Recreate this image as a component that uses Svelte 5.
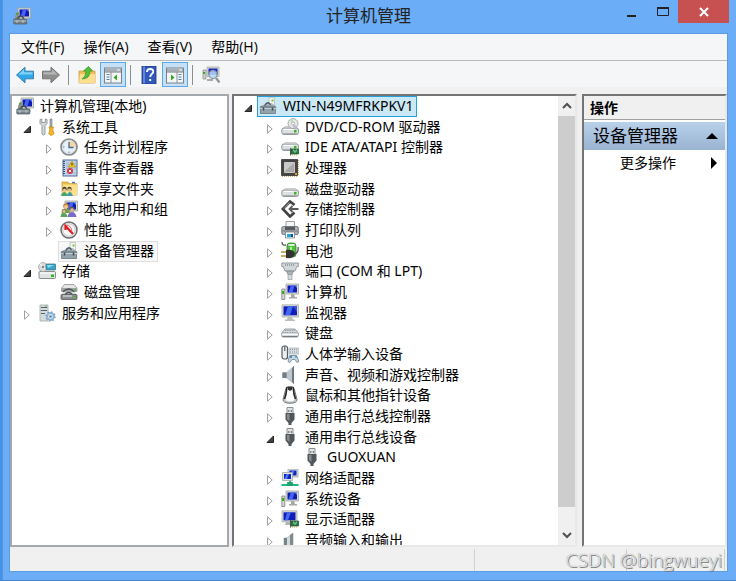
<script lang="ts">
  type TreeRow = {
    label: string;
    icon: string;
    level: number;
    state?: 'open' | 'closed';
    selected?: boolean;
  };

  const menus = ['文件(F)', '操作(A)', '查看(V)', '帮助(H)'];

  const consoleRows: TreeRow[] = [
    {label: '计算机管理(本地)', icon: 'console', level: 0},
    {label: '系统工具', icon: 'tools', level: 1, state: 'open'},
    {label: '任务计划程序', icon: 'clock', level: 2, state: 'closed'},
    {label: '事件查看器', icon: 'events', level: 2, state: 'closed'},
    {label: '共享文件夹', icon: 'shared', level: 2, state: 'closed'},
    {label: '本地用户和组', icon: 'users', level: 2, state: 'closed'},
    {label: '性能', icon: 'gauge', level: 2, state: 'closed'},
    {label: '设备管理器', icon: 'device', level: 2, selected: true},
    {label: '存储', icon: 'storage', level: 1, state: 'open'},
    {label: '磁盘管理', icon: 'disks', level: 2},
    {label: '服务和应用程序', icon: 'services', level: 1, state: 'closed'},
  ];

  const deviceRows: TreeRow[] = [
    {label: 'WIN-N49MFRKPKV1', icon: 'device', level: 0, state: 'open', selected: true},
    {label: 'DVD/CD-ROM 驱动器', icon: 'dvd', level: 1, state: 'closed'},
    {label: 'IDE ATA/ATAPI 控制器', icon: 'ide', level: 1, state: 'closed'},
    {label: '处理器', icon: 'cpu', level: 1, state: 'closed'},
    {label: '磁盘驱动器', icon: 'drive', level: 1, state: 'closed'},
    {label: '存储控制器', icon: 'controller', level: 1, state: 'closed'},
    {label: '打印队列', icon: 'printer', level: 1, state: 'closed'},
    {label: '电池', icon: 'battery', level: 1, state: 'closed'},
    {label: '端口 (COM 和 LPT)', icon: 'port', level: 1, state: 'closed'},
    {label: '计算机', icon: 'computer', level: 1, state: 'closed'},
    {label: '监视器', icon: 'monitor', level: 1, state: 'closed'},
    {label: '键盘', icon: 'keyboard', level: 1, state: 'closed'},
    {label: '人体学输入设备', icon: 'hid', level: 1, state: 'closed'},
    {label: '声音、视频和游戏控制器', icon: 'speaker', level: 1, state: 'closed'},
    {label: '鼠标和其他指针设备', icon: 'mouse', level: 1, state: 'closed'},
    {label: '通用串行总线控制器', icon: 'usb', level: 1, state: 'closed'},
    {label: '通用串行总线设备', icon: 'usb', level: 1, state: 'open'},
    {label: 'GUOXUAN', icon: 'usb', level: 2},
    {label: '网络适配器', icon: 'network', level: 1, state: 'closed'},
    {label: '系统设备', icon: 'computer', level: 1, state: 'closed'},
    {label: '显示适配器', icon: 'display', level: 1, state: 'closed'},
    {label: '音频输入和输出', icon: 'audio', level: 1, state: 'closed'},
  ];

  // all icons are drawn on an 18 x 18 grid
  const screen = `<path d="M5 1h12.500v10H5z" fill="#d9dcd6" stroke="#a0a49c" stroke-width=".8"/><path d="M6.500 2.500h9.500v7H6.500z" fill="#1019b8"/><path d="M10 2.500h3.500l-2 7H7.500z" fill="#4466ee"/><path d="M13.500 2.500H16v2.500z" fill="#6b8cf5"/>`;
  const disk = `<path d="M4 8.500h10.500l2.500 2.500H1.500z" fill="#f1f2f2" stroke="#b9bdbe" stroke-width=".7"/><rect x=".8" y="10" width="16.800" height="6.500" rx="2" fill="#dcdfe0" stroke="#8b9092" stroke-width=".9"/><path d="M2.500 11.500h10" stroke="#fff"/><path d="M2 15.500h14" stroke="#aaaeb0"/><rect x="13" y="12" width="2.500" height="2.500" fill="#36b51d"/>`;
  const board = `<path d="M10 11h7.500v5H10z" fill="#1f7c43" stroke="#17552f" stroke-width=".7"/><path d="M12 12h1v2h2v-2h1" fill="none" stroke="#b4d0b8" stroke-width=".8"/><path d="M11 17h6" stroke="#d7aa31" stroke-dasharray="1 1"/><path d="M9.500 10v7.500" stroke="#555"/>`;
  const arrow = 'M.5 9L9 1.200v4h8.500v7.600H9v4z';

  const icons: Record<string, string> = {
    console: `${screen}<path d="M7 11h7l1 4H9z" fill="#c7cac3"/><path d="M2 9l2-4h3v7H2z" fill="#8d9290"/><path d="M3 6h2v1.500H3z" fill="#43a52c"/><path d="M4 12q4-6 7 0" fill="none" stroke="#3f4b50" stroke-width="1.300"/><rect x=".8" y="12" width="13" height="5" rx=".6" fill="#708087" stroke="#4d5b61" stroke-width=".7"/><path d="M1 14h12M4 13v3M10 13v3" stroke="#c9d2d5" stroke-width=".8"/>`,
    tools: `<path d="M2 1.500v4L4 7.500v8.500q1.500 2 3 0V7.500L9 5.500v-4L7.300 1v3.500H3.800V1z" fill="#d6dadb" stroke="#7e8587" stroke-width=".8"/><path d="M12 1h2v8.500h-2z" fill="#a9afb2" stroke="#70777a" stroke-width=".6"/><path d="M11 9h4.500l-.7 2.500 1 4.500-2.500 1.500-2.500-1.500 1-4.500z" fill="#f6b524" stroke="#c4820e" stroke-width=".7"/>`,
    clock: `<circle cx="9" cy="9" r="8" fill="#edf4fa" stroke="#85898b" stroke-width="1.700"/><circle cx="9" cy="9" r="6.500" fill="#e6f1fb" stroke="#c9ced2" stroke-width=".6"/><path d="M9 9V2.700A6.300 6.300 0 0 1 15.300 9z" fill="#f6d69a"/><path d="M9 4v5.500h4.500" fill="none" stroke="#416a92" stroke-width="1.300"/><path d="M9 13.500v1.500M3 9h1.500" stroke="#6c8394"/>`,
    events: `<rect x="3" y="1" width="14" height="16" fill="#c4d4eb" stroke="#536a9e"/><path d="M4 2v14" stroke="#395183" stroke-width="2" stroke-dasharray="1 1"/><path d="M6 4h10M6 6h10M6 8h10M6 10h10M6 14h10" stroke="#90a7d0" stroke-width=".7"/><path d="M12 2l3.500 6h-7z" fill="#ffd528" stroke="#b98b00" stroke-width=".7"/><path d="M12 4v2.500" stroke="#222"/><circle cx="10" cy="12" r="3" fill="#d8313a"/><path d="M8.800 10.800l2.400 2.400m0-2.400l-2.400 2.400" stroke="#fff"/>`,
    shared: `<path d="M2 2h6l1 1.500h8V15H2z" fill="#e9ba4e" stroke="#c99b42" stroke-width=".7"/><path d="M3 4.500h14V15H2z" fill="#fbe089"/><path d="M12 2.500h3" stroke="#387bba" stroke-width="1.400"/><circle cx="4.500" cy="9" r="2.200" fill="#443b28"/><circle cx="9.500" cy="9" r="2.200" fill="#554b38"/><circle cx="4.500" cy="10" r="1.500" fill="#f0c8a4"/><circle cx="9.500" cy="10" r="1.500" fill="#f0c8a4"/><path d="M.8 16q3.500-8 7 0z" fill="#43a565"/><path d="M6.500 16q3.500-8 6.500 0z" fill="#3f9da5"/>`,
    users: `${screen}<circle cx="6" cy="6" r="2.800" fill="#c58537"/><circle cx="6" cy="7" r="1.900" fill="#f3c99c"/><path d="M1.500 13q1-5 4.500-4 4 0 4 4z" fill="#75a23c"/><circle cx="12" cy="9" r="2.600" fill="#655b51"/><circle cx="12" cy="10" r="1.800" fill="#e8bd96"/><path d="M7.500 17q1-5 4.500-5t4.500 5z" fill="#7b6bc8"/><circle cx="4" cy="11" r="2.300" fill="#8b8a51"/><circle cx="4" cy="11.500" r="1.300" fill="#f0c8a4"/><path d="M.5 17q1-5 3.500-4 3 0 3.500 4z" fill="#56a55a"/>`,
    gauge: `<circle cx="9" cy="9" r="8" fill="#f8f8f8" stroke="#686c6e" stroke-width="1.500"/><circle cx="9" cy="9" r="6.200" fill="none" stroke="#aaa" stroke-width=".7"/><path d="M5.500 9V5l7.500 8" fill="none" stroke="#e21c24" stroke-width="2.200"/><path d="M6 4.500q5-1 6 6" fill="none" stroke="#e8595c" stroke-width=".9"/>`,
    device: `<path d="M10 .5h5.500v8H10z" fill="#f2f5f0" stroke="#b0b7b2" stroke-width=".7"/><path d="M12.500 2.500h2v2h-2z" fill="#6fcb3a"/><path d="M3 9l4-3h6l3 3z" fill="#b6bec2"/><path d="M5.500 9q3.500-6 6-1" fill="none" stroke="#495359" stroke-width="1.300"/><path d="M.8 9.500L3 8.500h12l2.200 1v2.500H.8z" fill="#7c8a93"/><rect x="1.500" y="11.500" width="15" height="5" fill="#93a2ab" stroke="#6b7982" stroke-width=".8"/><path d="M1 11.500h16" stroke="#c3cdd3"/><path d="M4.500 10.500v3M13.500 10.500v3" stroke="#3f4c54" stroke-width="1.500"/>`,
    storage: `<rect x="1" y="9.500" width="16.500" height="7" rx="1" fill="#e0e3e4" stroke="#7c8284" stroke-width=".9"/><path d="M2 11h14" stroke="#fff"/><rect x="13" y="12.500" width="3" height="2.500" fill="#31b51e"/><circle cx="5" cy="5" r="4.500" fill="#dadede" stroke="#9ba1a2" stroke-width=".7"/><path d="M5 5L2 1.500M5 5l3 3" stroke="#fff"/><circle cx="5" cy="5" r="1.200" fill="#888"/><rect x="8" y="2" width="9.500" height="6" rx=".6" fill="#35a6cc" stroke="#42616e" stroke-width=".7"/><path d="M9 3h7l-6 3z" fill="#8bdcf0"/>`,
    disks: `<path d="M1.500 5l3-3.500h9.500l3 3.500v3.500H1.500z" fill="#e3e4e3" stroke="#8b9092" stroke-width=".8"/><path d="M2 5h15v3.500H2z" fill="#a1a5a6"/><path d="M3 9h12l2 3H1z" fill="#d8dad9"/><path d="M3 8.500q6-5 11 0M5 11.500q4-4 7 0" fill="none" stroke="#4c5152" stroke-width="1.500"/><rect x="1" y="11.500" width="16" height="5" rx="1" fill="#888d8e" stroke="#54595a" stroke-width=".8"/><path d="M3 13h9" stroke="#eee"/><path d="M14 7h2M13.500 14h2" stroke="#49b52a" stroke-width="1.500"/>`,
    services: `<path d="M2 1h8v16H2z" fill="#d5dbdd" stroke="#a0aab0" stroke-width=".8"/><path d="M3 3.500h6M3 6.500h6M3 9.500h4" stroke="#536167" stroke-width="1.200"/><path d="M8 1.500V3" stroke="#3bb537"/><circle cx="12.500" cy="12.500" r="3.400" fill="#e3edf5" stroke="#8db3d2" stroke-width="2"/><circle cx="12.500" cy="12.500" r="4.600" fill="none" stroke="#7c9fbd" stroke-width="1.300" stroke-dasharray="1.600 2"/><circle cx="12.500" cy="12.500" r="1.300" fill="#5d86aa"/>`,
    dvd: `${disk}<circle cx="12" cy="5.500" r="5" fill="#e6e6e3" stroke="#989b9c" stroke-width=".8"/><path d="M12 5.500L8.500 2q2-2 3.500-1z" fill="#b7e2b8"/><path d="M12 5.500l4 3q-2 2-4 1z" fill="#c9b7e8"/><circle cx="12" cy="5.500" r="1.500" fill="#fff" stroke="#999" stroke-width=".7"/>`,
    ide: `<g transform="translate(0 -4)">${disk}</g>${board}`,
    cpu: `<path d="M1 17h16M17 1v16" stroke="#c59d39" stroke-width="1.600" stroke-dasharray="1 1"/><path d="M.5 .5h16v16H.5z" fill="#454442" stroke="#2b2a29" stroke-width=".7"/><path d="M3.500 3.500h10v10h-10z" fill="#a9aaa8" stroke="#ddd" stroke-width=".8"/><path d="M4 4h9l-9 8z" fill="#c9cac7"/><path d="M14 14h2v2h-2z" fill="#e1a423"/>`,
    drive: disk,
    controller: `<path d="M13.500 5L9 1.500 1.800 9 9 16.500l4.500-4" fill="none" stroke="#424443" stroke-width="2.700"/><path d="M8.500 2.500L3 8.500" stroke="#bbb" stroke-width=".8"/><path d="M17.500 9H10M11.500 6L8.500 9l3 3" fill="none" stroke="#5a5c5b" stroke-width="1.800"/>`,
    printer: `<path d="M5 .5h8.500V8H5z" fill="#f6f7f7" stroke="#888" stroke-width=".8"/><rect x=".8" y="5.500" width="16.500" height="8" rx="1.500" fill="#aeb2b5" stroke="#60656a" stroke-width=".8"/><path d="M4 6h10v3H4z" fill="#555b60"/><path d="M1 10h16" stroke="#767b7f"/><path d="M4.500 11h9v6h-9z" fill="#f9fbfc" stroke="#7b8186" stroke-width=".8"/><path d="M6 13h5v3H6z" fill="#25a6d5"/><path d="M10 13h2v3h-2z" fill="#244ca0"/>`,
    battery: `<rect x="6" y="1" width="9" height="14" rx="3" fill="#53bf3e" stroke="#2b812b" stroke-width=".8"/><path d="M7.500 4h6V2h-6z" fill="#dceedd"/><path d="M9 5h2v9H9z" fill="#b3ed92"/><path d="M1 0q0 4 4 3M13 12q5-1 4-7" fill="none" stroke="#555" stroke-width="1.300"/><path d="M5 8q8-1 9 4-1 5-9 4z" fill="#323432"/><path d="M0 10h5M0 14h5" stroke="#b89129" stroke-width="1.600"/>`,
    port: `<path d="M.8 1h16.500v3.500h-1.500L14 9H4L2.300 4.500H.8z" fill="#d2d7da" stroke="#8b9397" stroke-width=".9"/><path d="M4 3h10" stroke="#61686d" stroke-dasharray="1 1"/><path d="M5.500 9h7L11 12.500H7z" fill="#a8b2b9" stroke="#7c888e" stroke-width=".8"/><path d="M7 12.500h4v5H7z" fill="#d6dadb" stroke="#858c8f" stroke-width=".6"/>`,
    computer: `${screen}<path d="M10 11h3l1 3h2v1.500H8V14h2z" fill="#a5aaa3"/><path d="M.8 6h3v10.500h-3z" fill="#d4d7d3" stroke="#7a8279" stroke-width=".8"/><path d="M1 8h2v3H1z" fill="#34a923"/>`,
    monitor: `<path d="M1 .8h16.500V13H1z" fill="#d7d9d6" stroke="#a9ada8" stroke-width=".8"/><path d="M2.500 2.300h13.500v9H2.500z" fill="#111dbb"/><path d="M7 2.300h5l-3 9H4z" fill="#4369ed"/><path d="M12 2.300h4V8z" fill="#3354dd"/><path d="M7 13h4l1 2.500h2V17H4v-1.500h2z" fill="#bbbeb5"/>`,
    keyboard: `<path d="M4 5h10l3.300 4v2.500q0 1.500-1.500 1.500H2.200Q.7 13 .7 11.500V9z" fill="#d5d9de" stroke="#8b929a" stroke-width=".9" stroke-linejoin="round"/><path d="M2.500 8.500h13M4 6.500h10" stroke="#8d959c" stroke-dasharray="1 .7"/><path d="M1 10.500h16" stroke="#fff"/><path d="M1.500 12.500h15" stroke="#737a82"/>`,
    hid: `<path d="M8 3h10v6H8z" fill="#d6dce1" stroke="#a4adb4" stroke-width=".7"/><path d="M9 4.500h8M9 7h8" stroke="#87929b" stroke-dasharray="1 1"/><rect x="1" y="1" width="5.500" height="13" rx="2" fill="#eee" stroke="#555c61" stroke-width="1.200"/><path d="M3.300 1h1v5h-1z" fill="#444b50"/><path d="M7 16.500l1.500-6h7l2.500 6-2 1-2-3h-3l-2 3z" fill="#c8d7e2" stroke="#687f90" stroke-width=".8"/><circle cx="10" cy="12" r="1" fill="#2b72a6"/><circle cx="15" cy="12" r="1" fill="#30a9d7"/>`,
    speaker: `<path d="M1.500 6.500h4L13 0v18l-7.500-6h-4z" fill="#818c95"/><path d="M5.500 6.500L12 1v16l-6.500-5z" fill="#c1c8cd"/><path d="M11 2.500L13 0v18l-2-2.500z" fill="#6b7780"/><path d="M1.500 6.500h4V12h-4z" fill="#737f87"/>`,
    mouse: `<path d="M6.500 .8h5q1.500 0 2 3.200L16 13.500q0 3.700-7 3.700t-7-3.700L4.500 4q.5-3.200 2-3.200z" fill="#c4c8ca" stroke="#70767a" stroke-width="1"/><path d="M6 2h6v5l1.500 7q-4.500 3-9 0L6 7z" fill="#fbfbfb"/><path d="M6 1L5 8l-1.500 5M12 1l1 7 1.500 5" fill="none" stroke="#222" stroke-width="1.500"/><path d="M7 .8h4v2.500q-2 3-4 0z" fill="#333"/>`,
    usb: `<path d="M6 .5h6V7H6z" fill="#e1e3e3" stroke="#8b9193"/><path d="M7.300 3h1v2h-1zM9.800 3h1v2h-1z" fill="#666"/><path d="M4.500 6h9v6.500L10.500 16v2h-3v-2l-3-3.500z" fill="#51565a"/><path d="M6 7h2.500v7L6 12z" fill="#858b8e"/>`,
    network: `<path d="M7 0h10v8H7z" fill="#d8dedc" stroke="#a0a9a7" stroke-width=".8"/><path d="M8.500 1.500h7v5h-7z" fill="#1225be"/><path d="M11 1.500h2.500l-2 5H9z" fill="#4d78f2"/><path d="M1.500 3.500h10v8h-10z" fill="#e0e2df" stroke="#a0a5a2" stroke-width=".8"/><path d="M3 5h7v5H3z" fill="#1225be"/><path d="M5.500 5H8l-2 5H3.500z" fill="#4d78f2"/><path d="M9 12v3M.5 16h17" stroke="#21bd7c" stroke-width="2"/><rect x="6" y="13" width="6" height="4" rx="1" fill="#1fa36f"/>`,
    display: `<path d="M1 .8h15v11H1z" fill="#d7d9d6" stroke="#a9ada8" stroke-width=".8"/><path d="M2.500 2.300h12v8h-12z" fill="#111dbb"/><path d="M6 2.300h4l-3 8H4z" fill="#4369ed"/><path d="M5 12h4.500v3H4z" fill="#b2b5ad"/>${board}`,
    audio: `<path d="M3 7h3l6-5v15H3z" fill="#d7dadc" stroke="#a2abb0" stroke-width=".7"/><path d="M9 4l3-2v15H9z" fill="#7f8a90"/><path d="M3 7h3v10H3z" fill="#75838b"/>`,
    back: `<path d="${arrow}" fill="#2ea8e8" stroke="#3b7fb4" stroke-linejoin="round"/><path d="M2.500 8.500L8 3.200v3h8.500v2.300z" fill="#7fd1f5"/>`,
    forward: `<path d="${arrow}" transform="matrix(-1 0 0 1 18 0)" fill="#8e8e8e" stroke="#757575" stroke-linejoin="round"/><path d="M1.500 6.200H10v-3l5.500 5.300h-14z" fill="#b5b5b5"/>`,
    up: `<path d="M1 5h6l1-2h5v2h4v12H1z" fill="#efbf55" stroke="#cfa04a" stroke-width=".8"/><path d="M2 8h15v9H1z" fill="#fbdf8f"/><path d="M4 13q4-2 4-8H5.500L10.500 .5 14.500 5H12q0 8-8 8z" fill="#55be35" stroke="#3d9a34" stroke-width=".8"/>`,
    paneleft: `<rect x=".5" y="2" width="17" height="15" fill="#f5f6f6" stroke="#79828a"/><path d="M1 2.500h16v3H1z" fill="#a6afb6"/><path d="M13 4h3" stroke="#fff"/><path d="M1 6h16" stroke="#737d85"/><path d="M2.500 8.500h3M2.500 11h3M2.500 13.500h3" stroke="#4b83ba"/><path d="M7 6v11" stroke="#89929a"/><path d="M13 8.500v6L9.500 11.500z" fill="#35a51c"/>`,
    paneright: `<rect x=".5" y="2" width="17" height="15" fill="#f5f6f6" stroke="#79828a"/><path d="M1 2.500h16v3H1z" fill="#a6afb6"/><path d="M13 4h3" stroke="#fff"/><path d="M1 6h16" stroke="#737d85"/><path d="M12.500 8.500h3M12.500 11h3M12.500 13.500h3" stroke="#4b83ba"/><path d="M11 6v11" stroke="#89929a"/><path d="M5 8.500v6l3.500-3z" fill="#35a51c"/>`,
    help: `<path d="M2 0h14v18H2z" fill="#3058bd" stroke="#20346d" stroke-width=".8"/><path d="M4 .5v17" stroke="#7594e1" stroke-width="1.500"/><path d="M7 6q0-3 3-3 3.500 0 3.200 2.800C13 8 10.200 8 10.200 11" fill="none" stroke="#fff" stroke-width="1.900"/><path d="M9.200 13h2v2h-2z" fill="#fff"/>`,
    scan: `<path d="M5 1h12v9.500H5z" fill="#d5d8d4" stroke="#a9ada6" stroke-width=".8"/><path d="M6.500 2.500h9V9h-9z" fill="#1826bd"/><path d="M1 4h3v9H1z" fill="#ccd0ca" stroke="#8d958c" stroke-width=".8"/><path d="M1 6h2v2H1z" fill="#34a923"/><path d="M5 13h6v2H5z" fill="#aaa"/><circle cx="11" cy="8.500" r="4" fill="#bbdffa" fill-opacity=".85" stroke="#8b98a2" stroke-width="1.300"/><path d="M14 12l3.500 4.500" stroke="#8d9396" stroke-width="2.200"/>`,
  };
</script>

{#snippet glyph(name: string)}
  <svg class="icon" viewBox="0 0 18 18" aria-hidden="true">{@html icons[name]}</svg>
{/snippet}

{#snippet tool(name: string, label: string, pressed = false)}
  <button type="button" class="tool" class:pressed title={label} aria-label={label}>
    {@render glyph(name)}
  </button>
{/snippet}

{#snippet tree(rows: TreeRow[], label: string)}
  <ul class="tree" aria-label={label}>
    {#each rows as row}
      <li class="row level-{row.level}">
        {#if row.state}
          <button
            type="button"
            class="toggle"
            aria-label={row.label}
            aria-expanded={row.state === 'open'}
          >
            <svg viewBox="0 0 10 10" aria-hidden="true">
              {#if row.state === 'open'}
                <path d="M8.500 2v6.500H2z" fill="#444" stroke="#222" />
              {:else}
                <path d="M2.500 .8v8.400L7.200 5z" fill="#fff" stroke="#a0a0a0" />
              {/if}
            </svg>
          </button>
        {:else}
          <span class="toggle"></span>
        {/if}
        <button type="button" class="node" class:selected={row.selected}>
          {@render glyph(row.icon)}
          <span>{row.label}</span>
        </button>
      </li>
    {/each}
  </ul>
{/snippet}

<div class="window">
  <header class="titlebar">
    <div class="app-icon">{@render glyph('console')}</div>
    <h1>计算机管理</h1>
    <div class="captions">
      <button type="button" aria-label="最小化">
        <svg viewBox="0 0 12 12"><path d="M1 10h9" stroke="#222" stroke-width="2" /></svg>
      </button>
      <button type="button" aria-label="最大化">
        <svg viewBox="0 0 12 12"><path d="M.5 1.500h11v8H.5z" fill="none" stroke="#222" /><path d="M0 2h12" stroke="#222" stroke-width="2" /></svg>
      </button>
      <button type="button" class="close" aria-label="关闭">
        <svg viewBox="0 0 12 12"><path d="M2 2l8 8M10 2l-8 8" stroke="#fff" stroke-width="2" /></svg>
      </button>
    </div>
  </header>

  <div class="client">
    <nav class="menubar">
      {#each menus as menu}
        <button type="button">{menu}</button>
      {/each}
    </nav>

    <div class="toolbar">
      {@render tool('back', '后退')}
      {@render tool('forward', '前进')}
      <span class="separator"></span>
      {@render tool('up', '向上')}
      {@render tool('paneleft', '显示/隐藏控制台树', true)}
      <span class="separator"></span>
      {@render tool('help', '帮助')}
      {@render tool('paneright', '显示/隐藏操作窗格', true)}
      <span class="separator"></span>
      {@render tool('scan', '扫描检测硬件改动')}
    </div>

    <main class="workspace">
      <section class="pane console">
        {@render tree(consoleRows, '控制台树')}
      </section>

      <section class="pane devices">
        {@render tree(deviceRows, '设备')}
        <div class="scrollbar">
          <button type="button" aria-label="向上滚动">
            <svg viewBox="0 0 10 10"><path d="M1 7l4-4 4 4" fill="none" stroke="#505050" stroke-width="2" /></svg>
          </button>
          <div class="thumb"></div>
          <button type="button" aria-label="向下滚动">
            <svg viewBox="0 0 10 10"><path d="M1 3l4 4 4-4" fill="none" stroke="#505050" stroke-width="2" /></svg>
          </button>
        </div>
      </section>

      <aside class="pane actions">
        <h2>操作</h2>
        <button type="button" class="group">
          <span>设备管理器</span>
          <svg viewBox="0 0 12 12"><path d="M6 3l6 6H0z" /></svg>
        </button>
        <button type="button" class="more">
          <span>更多操作</span>
          <svg viewBox="0 0 12 12"><path d="M4 0l6 6-6 6z" /></svg>
        </button>
      </aside>
    </main>

    <footer class="statusbar">
      <span></span>
      <span></span>
      <span></span>
    </footer>
  </div>
  <div class="watermark">CSDN @bingwueyi</div>
</div>

<style>
  :global(body) {
    margin: 0;
  }

  .window {
    background: #6badf6;
    border-bottom: 1px solid #4785cb;
    border-left: 2px solid #4394e8;
    box-shadow: inset 1px 0 #5594df;
    box-sizing: border-box;
    color: #000;
    display: flex;
    flex-direction: column;
    font-family: 'Noto Sans', 'Noto Sans CJK SC', sans-serif;
    font-size: 14px;
    height: 100vh;
    line-height: 20px;
    padding: 0 8px 8px 7px;
    position: relative;
  }

  button {
    align-items: center;
    background: transparent;
    border: 0;
    color: inherit;
    display: flex;
    font: inherit;
    padding: 0;
    white-space: nowrap;
  }

  svg {
    display: block;
    flex: none;
  }

  .icon {
    height: 18px;
    width: 18px;
  }

  .titlebar {
    display: grid;
    flex: none;
    grid-template-columns: 1fr auto 1fr;
    height: 33px;
  }

  .app-icon {
    padding: 7px 4px;
  }

  h1 {
    color: #222;
    font-size: 17px;
    font-weight: 400;
    line-height: 32px;
    margin: 0;
  }

  .captions {
    display: flex;
    height: 23px;
    justify-content: flex-end;
    margin-right: -1px;
  }

  .captions button {
    justify-content: center;
    width: 31px;
  }

  .captions .close {
    background: #c75050;
    width: 51px;
  }

  .captions svg {
    height: 12px;
    width: 12px;
  }

  .client {
    background: #f0f0f0;
    border: 1px solid #5c9ce5;
    display: flex;
    flex: 1;
    flex-direction: column;
    min-height: 0;
  }

  .menubar {
    background: #f5f6f7;
    border-bottom: 1px solid #b8babc;
    display: flex;
    font-family: 'Open Sans', 'Noto Sans CJK SC', sans-serif;
    gap: 19px;
    height: 26px;
    padding-left: 11px;
  }

  .toolbar {
    background: #f5f6f7;
    display: flex;
    height: 25px;
    margin-bottom: 7px;
    padding: 1px 2px 0;
  }

  .tool {
    box-sizing: border-box;
    height: 25px;
    justify-content: center;
    width: 26px;
  }

  .tool.pressed {
    background: #c5e0f7;
    border: 1px solid #5ba9ea;
  }

  .separator {
    background: #8d8d8d;
    height: 20px;
    margin: 3px 5px 0 4px;
    width: 1px;
  }

  .workspace {
    display: grid;
    flex: 1;
    grid-template-columns: 219px minmax(0, 1fr) 145px;
    min-height: 0;
  }

  .pane {
    background: #fff;
    box-sizing: border-box;
    min-height: 0;
    overflow: hidden;
  }

  .console {
    border: 2px solid #a3a7ae;
  }

  .devices,
  .actions {
    border: 2px solid #e8e8e8;
    border-left-color: #747474;
    border-top-color: #747474;
  }

  .devices {
    display: flex;
    margin: 0 5px 0 3px;
  }

  .tree {
    flex: 1;
    list-style: none;
    margin: 0;
    overflow: hidden;
    padding: 0;
  }

  .row {
    display: flex;
    height: 21px;
  }

  .row:nth-child(3n) {
    height: 20px;
  }

  .toggle {
    flex: none;
    height: 100%;
    padding: 2px 0 0 2px;
    width: 16px;
  }

  span.toggle {
    padding: 0;
  }

  .toggle svg {
    height: 10px;
    width: 10px;
  }

  .console .level-0 {
    padding-left: 2px;
  }

  .console .level-0 .toggle {
    display: none;
  }

  .console .level-1 {
    padding-left: 8px;
  }

  .console .level-2 {
    padding-left: 30px;
  }

  .devices .level-0 {
    padding-left: 7px;
  }

  .devices .level-1 {
    padding-left: 29px;
  }

  .devices .level-2 {
    padding-left: 51px;
  }

  .node {
    border: 1px solid transparent;
    gap: 6px;
    padding: 0 3px 2px 1px;
  }

  .console .selected {
    background: #f7f7f7;
    border-color: #dedede;
  }

  .devices .selected {
    background: #cbe8f6;
    border-color: #26a0da;
  }

  .scrollbar {
    background: #f0f0f0;
    display: flex;
    flex: none;
    flex-direction: column;
    width: 17px;
  }

  .scrollbar button {
    height: 20px;
    justify-content: center;
  }

  .scrollbar svg {
    height: 10px;
    width: 10px;
  }

  .thumb {
    background: #cdcdcd;
    flex: 1;
    margin-bottom: 18px;
  }

  h2 {
    background: #f0f0f0;
    border-bottom: 1px solid #a0a0a0;
    font-size: 14px;
    line-height: 23px;
    margin: 0 0 2px;
    padding-left: 6px;
  }

  .group,
  .more {
    justify-content: space-between;
    width: 100%;
  }

  .group {
    background: linear-gradient(#b9d1ea, #98b2d1);
    font-size: 17px;
    height: 28px;
    padding: 0 7px 0 9px;
  }

  .more {
    height: 26px;
    padding: 0 6px 0 36px;
  }

  .group svg,
  .more svg {
    height: 12px;
    width: 12px;
  }

  .statusbar {
    display: grid;
    flex: none;
    grid-template-columns: 1fr 152px 98px;
    height: 24px;
    padding-right: 2px;
  }

  .statusbar span {
    border-right: 1px solid #d0d0d0;
    margin-top: 2px;
  }

  .watermark {
    bottom: 8px;
    color: #eaeaea;
    font-family: 'Open Sans', sans-serif;
    font-size: 19px;
    font-weight: 300;
    line-height: 24px;
    pointer-events: none;
    position: absolute;
    right: 14px;
    text-shadow: 1px 1px 0 #777, 0 0 1px #777;
  }
</style>
